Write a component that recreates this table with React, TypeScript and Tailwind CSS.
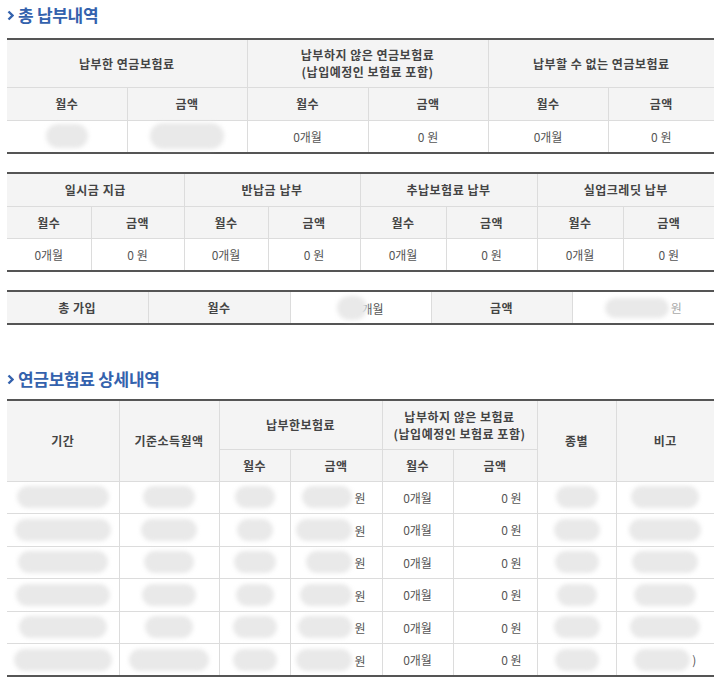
import React from 'react';

const font = { fontFamily: '"Noto Sans CJK KR", "Noto Sans", sans-serif' };

const th = 'bg-[#f4f4f4] border border-[#dcdcdc] text-[12px] font-bold text-[#444] text-center leading-[17px] tracking-[0.5px]';
const td = 'bg-white border border-[#dcdcdc] text-[12px] text-[#555] text-center leading-[17px]';

function Blob({ className }: { className: string }) {
  return <span className={'inline-block align-middle rounded-full bg-[#e9e9e9] blur-[2px] ' + className} />;
}

function Title({ text }: { text: string }) {
  return (
    <div className="flex items-center gap-[4px] text-[17px] font-bold text-[#3462ad] tracking-[-0.3px]">
      <svg width="7" height="11" viewBox="0 0 7 11">
        <polyline points="1.5,1.5 5.5,5.5 1.5,9.5" fill="none" stroke="#3462ad" strokeWidth="2.4" />
      </svg>
      <span>{text}</span>
    </div>
  );
}

const detailRows = [
  { a: 'w-[92px]', b: 'w-[52px]', c: 'w-[40px]', d: 'w-[50px]', e: 'w-[42px]', f: 'w-[68px]', tail: '' },
  { a: 'w-[96px]', b: 'w-[56px]', c: 'w-[36px]', d: 'w-[56px]', e: 'w-[46px]', f: 'w-[72px]', tail: '' },
  { a: 'w-[90px]', b: 'w-[50px]', c: 'w-[42px]', d: 'w-[46px]', e: 'w-[44px]', f: 'w-[66px]', tail: '' },
  { a: 'w-[94px]', b: 'w-[54px]', c: 'w-[38px]', d: 'w-[52px]', e: 'w-[40px]', f: 'w-[62px]', tail: '' },
  { a: 'w-[88px]', b: 'w-[48px]', c: 'w-[44px]', d: 'w-[54px]', e: 'w-[46px]', f: 'w-[70px]', tail: '' },
  { a: 'w-[98px]', b: 'w-[80px]', c: 'w-[44px]', d: 'w-[56px]', e: 'w-[44px]', f: 'w-[56px]', tail: ')' },
];

export default function App() {
  return (
    <div className="w-[720px] h-[684px] bg-white pl-[7px] pr-[6px] overflow-hidden" style={font}>
      <div className="h-[30px] mb-[8px] flex items-center">
        <Title text="총 납부내역" />
      </div>

      {/* 총 납부내역 1 */}
      <table className="w-full border-collapse table-fixed border-t-2 border-b-2 border-t-[#555] border-b-[#555]">
        <colgroup>
          <col className="w-[120px]" />
          <col className="w-[120px]" />
          <col className="w-[121px]" />
          <col className="w-[120px]" />
          <col className="w-[120px]" />
          <col />
        </colgroup>
        <tbody>
          <tr className="h-[48px]">
            <th colSpan={2} className={th + ' border-l-0 border-t-0'}>납부한 연금보험료</th>
            <th colSpan={2} className={th + ' border-t-0'}>납부하지 않은 연금보험료<br />(납입예정인 보험료 포함)</th>
            <th colSpan={2} className={th + ' border-r-0 border-t-0'}>납부할 수 없는 연금보험료</th>
          </tr>
          <tr className="h-[33px]">
            <th className={th + ' border-l-0'}>월수</th>
            <th className={th}>금액</th>
            <th className={th}>월수</th>
            <th className={th}>금액</th>
            <th className={th}>월수</th>
            <th className={th + ' border-r-0'}>금액</th>
          </tr>
          <tr className="h-[33px]">
            <td className={td + ' border-l-0 border-b-0'}><Blob className="w-[42px] h-[24px]" /></td>
            <td className={td + ' border-b-0'}><Blob className="w-[74px] h-[26px]" /></td>
            <td className={td + ' border-b-0'}>0개월</td>
            <td className={td + ' border-b-0'}>0 원</td>
            <td className={td + ' border-b-0'}>0개월</td>
            <td className={td + ' border-r-0 border-b-0'}>0 원</td>
          </tr>
        </tbody>
      </table>

      {/* 총 납부내역 2 */}
      <table className="mt-[18px] w-full border-collapse table-fixed border-t-2 border-b-2 border-t-[#555] border-b-[#555]">
        <colgroup>
          <col className="w-[84px]" />
          <col className="w-[93px]" />
          <col className="w-[84px]" />
          <col className="w-[92px]" />
          <col className="w-[86px]" />
          <col className="w-[91px]" />
          <col className="w-[86px]" />
          <col />
        </colgroup>
        <tbody>
          <tr className="h-[33px]">
            <th colSpan={2} className={th + ' border-l-0 border-t-0'}>일시금 지급</th>
            <th colSpan={2} className={th + ' border-t-0'}>반납금 납부</th>
            <th colSpan={2} className={th + ' border-t-0'}>추납보험료 납부</th>
            <th colSpan={2} className={th + ' border-r-0 border-t-0'}>실업크레딧 납부</th>
          </tr>
          <tr className="h-[32px]">
            {[0, 1, 2, 3].map((i) => (
              <React.Fragment key={i}>
                <th className={th + (i === 0 ? ' border-l-0' : '')}>월수</th>
                <th className={th + (i === 3 ? ' border-r-0' : '')}>금액</th>
              </React.Fragment>
            ))}
          </tr>
          <tr className="h-[33px]">
            {[0, 1, 2, 3].map((i) => (
              <React.Fragment key={i}>
                <td className={td + ' border-b-0' + (i === 0 ? ' border-l-0' : '')}>0개월</td>
                <td className={td + ' border-b-0' + (i === 3 ? ' border-r-0' : '')}>0 원</td>
              </React.Fragment>
            ))}
          </tr>
        </tbody>
      </table>

      {/* 총 가입 */}
      <table className="mt-[18px] w-full border-collapse table-fixed border-t-2 border-b-2 border-t-[#555] border-b-[#555]">
        <colgroup>
          <col className="w-[141px]" />
          <col className="w-[142px]" />
          <col className="w-[141px]" />
          <col className="w-[141px]" />
          <col />
        </colgroup>
        <tbody>
          <tr className="h-[33px]">
            <th className={th + ' border-l-0 border-y-0'}>총 가입</th>
            <th className={th + ' border-y-0'}>월수</th>
            <td className={td + ' border-y-0'}>
              <Blob className="w-[30px] h-[24px] -mr-[6px]" />
              <span className="align-middle">개월</span>
            </td>
            <th className={th + ' border-y-0'}>금액</th>
            <td className={td + ' border-y-0 border-r-0'}>
              <Blob className="w-[64px] h-[20px] mr-[2px]" />
              <span className="align-middle text-[#aaa]">원</span>
            </td>
          </tr>
        </tbody>
      </table>

      <div className="mt-[40px] h-[28px] mb-[6px] flex items-center">
        <Title text="연금보험료 상세내역" />
      </div>

      {/* 연금보험료 상세내역 */}
      <table className="w-full border-collapse table-fixed border-t-2 border-b-2 border-t-[#555] border-b-[#555]">
        <colgroup>
          <col className="w-[112px]" />
          <col className="w-[100px]" />
          <col className="w-[71px]" />
          <col className="w-[92px]" />
          <col className="w-[71px]" />
          <col className="w-[84px]" />
          <col className="w-[79px]" />
          <col />
        </colgroup>
        <tbody>
          <tr className="h-[49px]">
            <th rowSpan={2} className={th + ' border-l-0 border-t-0'}>기간</th>
            <th rowSpan={2} className={th + ' border-t-0'}>기준소득월액</th>
            <th colSpan={2} className={th + ' border-t-0'}>납부한보험료</th>
            <th colSpan={2} className={th + ' border-t-0'}>납부하지 않은 보험료<br />(납입예정인 보험료 포함)</th>
            <th rowSpan={2} className={th + ' border-t-0'}>종별</th>
            <th rowSpan={2} className={th + ' border-r-0 border-t-0'}>비고</th>
          </tr>
          <tr className="h-[32px]">
            <th className={th}>월수</th>
            <th className={th}>금액</th>
            <th className={th}>월수</th>
            <th className={th}>금액</th>
          </tr>
          {detailRows.map((r, i) => {
            const last = i === detailRows.length - 1 ? ' border-b-0' : '';
            return (
              <tr key={i} className="h-[32.5px]">
                <td className={td + ' border-l-0' + last}><Blob className={r.a + ' h-[22px]'} /></td>
                <td className={td + last}><Blob className={r.b + ' h-[22px]'} /></td>
                <td className={td + last}>
                  <Blob className={r.c + ' h-[22px]'} />
                </td>
                <td className={td + ' text-right pr-[16px]' + last}>
                  <Blob className={r.d + ' h-[22px] mr-[2px]'} />
                  <span className="align-middle">원</span>
                </td>
                <td className={td + last}>0개월</td>
                <td className={td + ' text-right pr-[15px]' + last}>0 원</td>
                <td className={td + last}><Blob className={r.e + ' h-[22px]'} /></td>
                <td className={td + ' border-r-0' + last}>
                  <Blob className={r.f + ' h-[22px]'} />
                  {r.tail && <span className="align-middle ml-[2px]">{r.tail}</span>}
                </td>
              </tr>
            );
          })}
        </tbody>
      </table>
    </div>
  );
}
